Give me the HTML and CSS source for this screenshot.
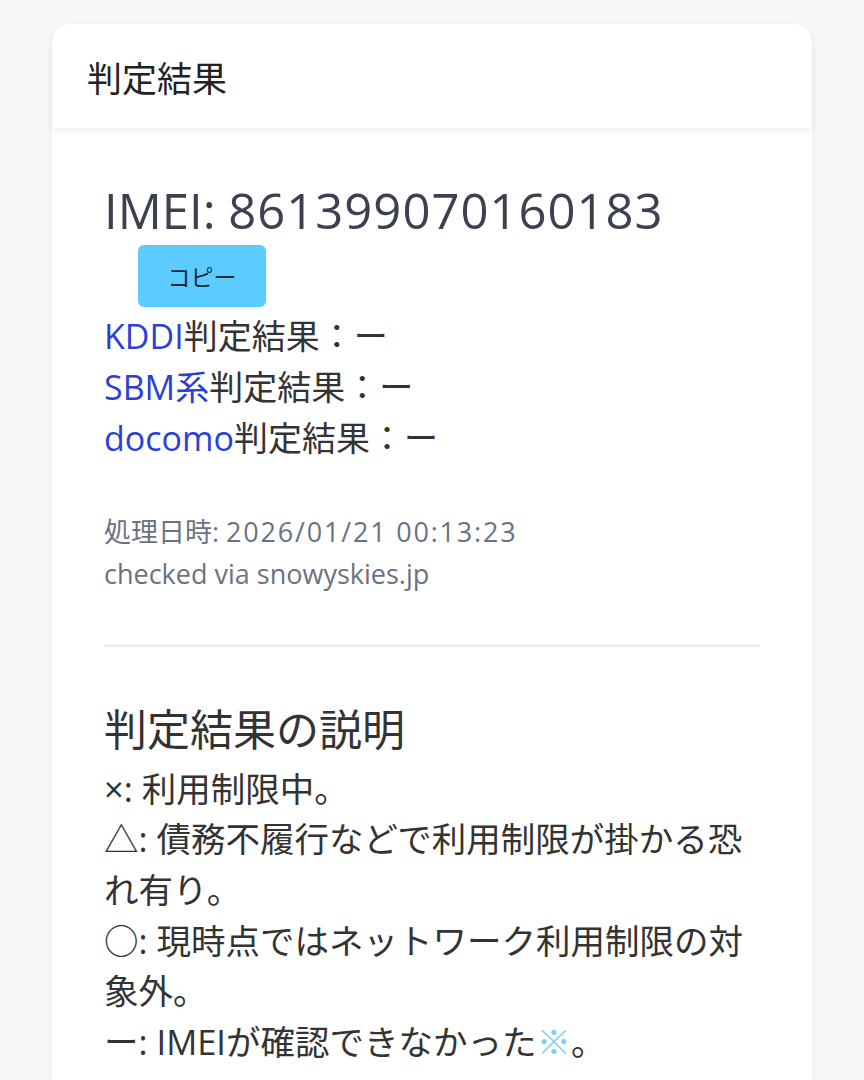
FILE: index.html
```html
<!DOCTYPE html>
<html lang="ja">
<head>
  <meta charset="UTF-8">
  <title>判定結果</title>
  <link rel="stylesheet" href="styles.css">
</head>
<body>
  <div class="result-card">
    <div class="card-header">判定結果</div>

    <div class="card-body">
      <h2 class="imei">IMEI: <span class="imei-number">861399070160183</span></h2>
      <button type="button" class="copy-button">コピー</button>

      <div class="carrier-results">
        <div><a href="#">KDDI</a>判定結果：ー</div>
        <div><a href="#">SBM系</a>判定結果：ー</div>
        <div><a href="#">docomo</a>判定結果：ー</div>
      </div>

      <div class="meta">
        <div>処理日時: <span class="timestamp">2026/01/21 00:13:23</span></div>
        <div>checked via snowyskies.jp</div>
      </div>

      <hr class="divider">

      <h3 class="legend-title">判定結果の説明</h3>
      <div class="legend">
        <div>×: 利用制限中。</div>
        <div>△: 債務不履行などで利用制限が掛かる恐れ有り。</div>
        <div>○: 現時点ではネットワーク利用制限の対象外。</div>
        <div>ー: IMEIが確認できなかった<a href="#" class="note">※</a>。</div>
      </div>
    </div>
  </div>
</body>
</html>
```

FILE: styles.css
```css
body {
  font-family: 'Open Sans', 'Noto Sans CJK JP', sans-serif;
  margin: 0;
  padding: 24px 52px;
  background-color: #f7f7f7;
  color: #333;
}
.result-card {
  background-color: white;
  border-radius: 18px;
  box-shadow: 0 2px 12px rgba(0, 0, 0, 0.04);
}
.card-header {
  height: 104px;
  padding: 0 35px;
  display: flex;
  align-items: center;
  font-size: 35px;
  color: #222;
  border-radius: 18px 18px 0 0;
  box-shadow: 0 4px 6px rgba(0, 0, 0, 0.06);
}
.card-body {
  padding: 53px 52px 40px;
}
.imei {
  margin: 0;
  font-size: 49px;
  font-weight: 400;
  line-height: 1.2;
  color: #3c4150;
}
.imei-number {
  letter-spacing: 1px;
}
.copy-button {
  display: block;
  margin: 5px 0 0 34px;
  width: 128px;
  height: 62px;
  border: none;
  border-radius: 6px;
  background-color: #5ccbff;
  color: #1e2a3a;
  font-family: inherit;
  font-size: 23px;
}
.carrier-results {
  margin-top: 4px;
  font-size: 34px;
  line-height: 51px;
}
a {
  color: #2b3fd6;
  text-decoration: none;
}
.meta {
  margin-top: 47px;
  font-size: 27px;
  line-height: 42px;
  color: #6b7280;
}
.timestamp {
  letter-spacing: 1.8px;
}
.divider {
  margin: 49px 0 0;
  border: none;
  height: 3px;
  background-color: #efefef;
}
.legend-title {
  margin: 51px 0 0;
  font-size: 43px;
  font-weight: 400;
  line-height: 63px;
  color: #333;
}
.legend {
  margin-top: 3px;
  font-size: 34.5px;
  line-height: 50.6px;
}
.legend .note {
  color: #7fd0f2;
}
```
